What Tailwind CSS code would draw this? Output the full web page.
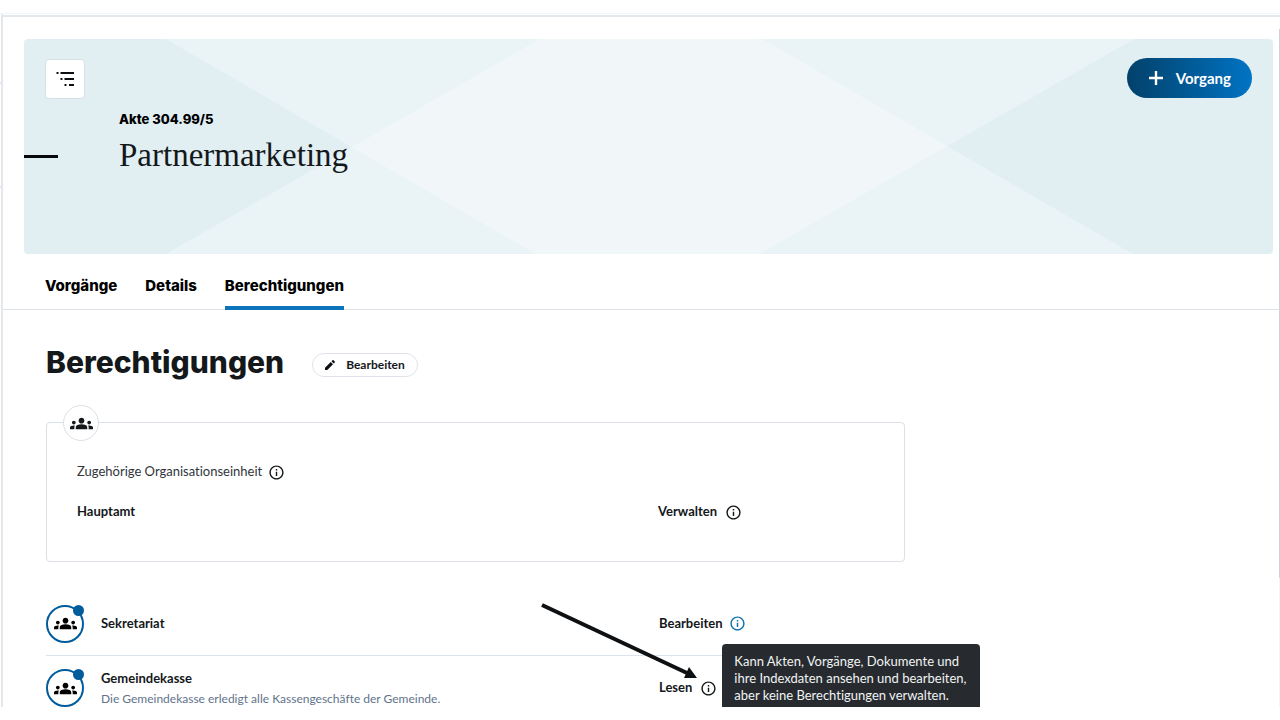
<!DOCTYPE html>
<html lang="de">
<head>
<meta charset="utf-8">
<meta name="viewport" content="width=device-width, initial-scale=1">
<title>Akte 304.99/5 – Berechtigungen</title>
<script src="https://cdn.jsdelivr.net/npm/@tailwindcss/browser@4"></script>
</head>
<body class="flex h-screen flex-col overflow-hidden bg-white py-[13px] font-['Lato',sans-serif] text-[13px] text-[#14181b] [font-variant-ligatures:none]">

<!-- Shared icons -->
<svg class="hidden" aria-hidden="true">
  <symbol id="groups" viewBox="0 0 24 24"><path d="M12 12.750c1.630 0 3.070.39 4.240.9 1.080.48 1.760 1.560 1.760 2.730V18H6v-1.610c0-1.180.68-2.260 1.760-2.730 1.170-.52 2.610-.91 4.240-.91zM4 13c1.100 0 2-.9 2-2s-.9-2-2-2-2 .9-2 2 .9 2 2 2zm1.130 1.100c-.37-.06-.74-.1-1.130-.1-.99 0-1.930.21-2.780.58C.48 14.900 0 15.620 0 16.430V18h4.500v-1.610c0-.83.23-1.610.63-2.290zM20 13c1.100 0 2-.9 2-2s-.9-2-2-2-2 .9-2 2 .9 2 2 2zm4 3.430c0-.81-.48-1.530-1.220-1.850-.85-.37-1.790-.58-2.780-.58-.39 0-.76.04-1.130.1.4.68.63 1.460.63 2.290V18H24v-1.570zM12 6c1.660 0 3 1.340 3 3s-1.340 3-3 3-3-1.340-3-3 1.340-3 3-3z" fill="currentColor"/></symbol>
  <symbol id="info" viewBox="0 0 24 24"><path d="M11 7h2v2h-2zm0 4h2v6h-2zm1-9C6.480 2 2 6.480 2 12s4.480 10 10 10 10-4.480 10-10S17.520 2 12 2zm0 18c-4.410 0-8-3.590-8-8s3.590-8 8-8 8 3.590 8 8-3.590 8-8 8z" fill="currentColor"/></symbol>
</svg>

<div class="relative flex min-h-0 flex-1 overflow-hidden border-t border-[#f2f5f7]">
  <aside class="flex w-[3px] shrink-0 flex-col border-r-2 border-[#e4e8ed]">
    <span class="mt-[68px] h-0.5 w-0.5 bg-[#e4e8ed]"></span>
    <span class="mt-[102px] h-0.5 w-0.5 bg-[#e4e8ed]"></span>
  </aside>

  <main class="min-w-0 flex-1">
    <div class="mt-px h-0.5 bg-[#e2e8eb]"></div>

    <header class="relative mt-[22px] mr-[7px] ml-[21px] h-[215px] overflow-hidden rounded bg-[#e1eff3]">
      <svg class="absolute inset-0 h-full w-full" viewBox="0 0 1249 215" preserveAspectRatio="none" aria-hidden="true">
        <path d="M142 0H738L1109 215H512Z" fill="#fff" fill-opacity=".32"/>
        <path d="M516 0H1110L735 215H142Z" fill="#fff" fill-opacity=".32"/>
      </svg>
      <div class="relative flex items-start justify-between pt-5 pr-[21px] pl-[21px]">
        <button type="button" aria-label="Struktur anzeigen" class="flex size-10 items-center justify-center rounded border border-[#d6e0e6] bg-white">
          <svg class="h-4 w-5" viewBox="0 0 20 16" fill="#0b0f12" aria-hidden="true">
            <path d="M1.500 1h2v2h-2zM5.500 1H19v2H5.500zM5.500 7h2v2h-2zM9.500 7H19v2H9.500zM9.500 13h2v2h-2zM14 13h5v2h-5z"/>
          </svg>
        </button>
        <button type="button" class="-mt-px flex h-10 items-center gap-3 rounded-full bg-linear-to-r from-[#02416b] to-[#0074c4] px-[21px] text-[15px] font-bold text-white">
          <svg class="size-4" viewBox="0 0 16 16" aria-hidden="true"><path d="M8 1v14M1 8h14" stroke="#fff" stroke-width="2.400"/></svg>
          Vorgang
        </button>
      </div>
      <div class="relative mt-2.5 pl-[95px]">
        <p class="font-['Inter',sans-serif] text-[13px] leading-5 font-extrabold text-black">Akte 304.99/5</p>
        <div class="absolute top-[46px] left-0 h-[3px] w-[34px] bg-[#05090b]"></div>
        <h1 class="mt-1.5 font-['Liberation_Serif',serif] text-[33px] leading-10 text-[#14181b]">Partnermarketing</h1>
      </div>
    </header>

    <nav class="flex gap-7 border-b border-[#dde1e7] pl-[42px] font-['Inter',sans-serif] text-[15px] leading-6 font-extrabold text-black" aria-label="Akte">
      <a href="#vorgaenge" class="pt-5 pb-[11px]">Vorgänge</a>
      <a href="#details" class="pt-5 pb-[11px]">Details</a>
      <a href="#berechtigungen" aria-current="page" class="-mb-px border-b-4 border-[#0b74bb] pt-5 pb-2">Berechtigungen</a>
    </nav>

    <section class="relative max-w-[902px] pl-[43px]">
      <div class="flex items-center gap-7 pt-8">
        <h2 class="font-['Inter',sans-serif] text-[30px] leading-10 font-extrabold">Berechtigungen</h2>
        <button type="button" class="mt-1.5 flex h-6 items-center gap-2.5 rounded-full border border-[#dfe3e9] pr-3 pl-[11px] text-[12px] font-bold">
          <svg class="size-3" viewBox="0 0 24 24" fill="#0b0f12" aria-hidden="true"><path d="M2 17.500V22h4.500L18 10.500 13.500 6zM21.500 7c.6-.6.6-1.400 0-2l-2.500-2.500c-.6-.6-1.400-.6-2 0l-2 2 4.500 4.500z"/></svg>
          Bearbeiten
        </button>
      </div>

      <div class="relative mt-10 rounded border border-[#dbe1e7] px-[30px] py-[39px]">
        <div class="absolute -top-[18px] left-4 flex size-9 items-center justify-center rounded-full border border-[#dbe1e7] bg-white">
          <svg class="size-[23px]"><use href="#groups"/></svg>
        </div>
        <div class="flex h-5 items-center gap-1.5 text-[#30363b]">Zugehörige Organisationseinheit
          <button type="button" aria-label="Information" class="text-[#14181b]"><svg class="size-[17px]"><use href="#info"/></svg></button>
        </div>
        <div class="mt-5 grid h-5 grid-cols-[1fr_216px] items-center font-bold">
          <span>Hauptamt</span>
          <span class="flex items-center gap-2">Verwalten
            <button type="button" aria-label="Information"><svg class="size-[17px]"><use href="#info"/></svg></button>
          </span>
        </div>
      </div>

      <ul class="mt-[30px]">
        <li class="grid h-16 grid-cols-[55px_1fr_246px] items-center border-b border-[#dbe3ec] font-bold">
          <span class="relative flex size-[38px] items-center justify-center rounded-full border-2 border-[#005c9b]">
            <svg class="size-[23px] text-black"><use href="#groups"/></svg>
            <span class="absolute -top-0.5 -right-0.5 size-[11px] rounded-full bg-[#005c9b]"></span>
          </span>
          <span>Sekretariat</span>
          <span class="flex items-center gap-1.5">Bearbeiten
            <button type="button" aria-label="Information" class="text-[#0b6fae]"><svg class="size-[17px]"><use href="#info"/></svg></button>
          </span>
        </li>
        <li class="grid h-16 grid-cols-[55px_1fr_246px] items-center font-bold">
          <span class="relative flex size-[38px] items-center justify-center rounded-full border-2 border-[#005c9b]">
            <svg class="size-[23px] text-black"><use href="#groups"/></svg>
            <span class="absolute -top-0.5 -right-0.5 size-[11px] rounded-full bg-[#005c9b]"></span>
          </span>
          <span class="flex flex-col gap-1 leading-[18px]">Gemeindekasse
            <small class="text-[12px] leading-[16px] font-normal text-[#61738b]">Die Gemeindekasse erledigt alle Kassengeschäfte der Gemeinde.</small>
          </span>
          <span class="flex items-center gap-2">Lesen
            <span class="relative flex">
              <button type="button" aria-label="Information" aria-describedby="hinweis"><svg class="size-[17px]"><use href="#info"/></svg></button>
              <span id="hinweis" role="tooltip" class="absolute -top-9 left-[22px] w-[258px] rounded-sm bg-[#272b2f] py-[9px] pr-2 pl-3 text-[13px] leading-[17px] font-normal text-[#f1f3f4]">Kann Akten, Vorgänge, Dokumente und<br>ihre Indexdaten ansehen und bearbeiten,<br>aber keine Berechtigungen verwalten.</span>
            </span>
          </span>
        </li>
      </ul>

      <!-- Arrow pointing at the information icon -->
      <svg class="absolute top-[293px] left-[537px] h-20 w-40" viewBox="0 0 160 80" aria-hidden="true">
        <path d="M2 2L147 70" stroke="#0e1114" stroke-width="4"/>
        <path d="M157 75L144 75 149 64Z" fill="#0e1114"/>
      </svg>
    </section>
  </main>

  <div class="absolute top-[15px] right-0 bottom-0 w-px bg-[#f3f4f6]"><div class="h-[81%] bg-[#cdd3da]"></div></div>
</div>
</body>
</html>
